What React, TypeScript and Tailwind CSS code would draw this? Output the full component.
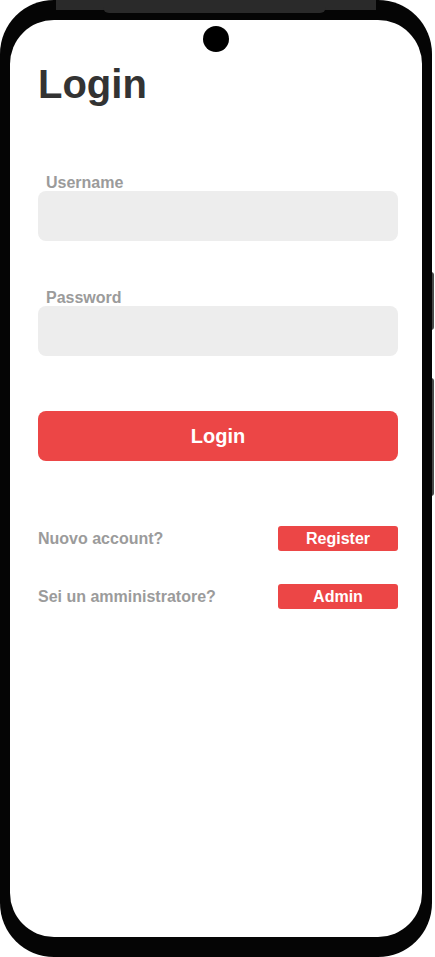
import React from "react";

const font = { fontFamily: '"Liberation Sans", Arial, sans-serif' };

function Field({ label, type }: { label: string; type: string }) {
  return (
    <label className="flex flex-col">
      <span className="pl-2 text-[16px] leading-[17px] font-bold text-[#9b9b9b]">{label}</span>
      <input type={type} className="h-[50px] w-full rounded-lg bg-[#ededed] px-3 outline-none" />
    </label>
  );
}

function LinkRow({ text, action }: { text: string; action: string }) {
  return (
    <div className="flex h-[25px] items-center justify-between">
      <span className="text-[16px] leading-[25px] font-bold text-[#9b9b9b]">{text}</span>
      <button className="h-[25px] w-[120px] rounded-[3px] bg-[#ec4646] text-[16px] leading-[25px] font-bold text-white">
        {action}
      </button>
    </div>
  );
}

export default function App() {
  return (
    <div className="relative h-[957px] w-[435px] bg-white" style={font}>
      {/* side buttons */}
      <div className="absolute left-[431px] top-[272px] h-[58px] w-[3px] rounded-r-sm bg-[#4a4a4a]" />
      <div className="absolute left-[431px] top-[378px] h-[118px] w-[3px] rounded-r-sm bg-[#4a4a4a]" />

      <div className="relative flex h-[957px] w-[432px] flex-col rounded-[54px] bg-[#050505] px-[10px] py-[20px]">
        {/* top speaker bar */}
        <div className="absolute left-[56px] top-0 h-[10px] w-[320px] bg-[#2a2a2a]" />
        <div className="absolute left-[103px] top-0 h-[13px] w-[223px] rounded-b-[6px] bg-[#2a2a2a]" />

        <div className="relative flex flex-1 flex-col rounded-[44px] bg-white pl-[28px] pr-[24px] pt-[40px]">
          {/* camera */}
          <div className="absolute left-[193px] top-[6px] h-[26px] w-[26px] rounded-full bg-black" />

          <h1 className="text-[40px] leading-[48px] font-bold text-[#333333]">Login</h1>

          <div className="mt-[66px] flex flex-col gap-[48px]">
            <Field label="Username" type="text" />
            <Field label="Password" type="password" />
          </div>

          <button className="mt-[55px] h-[50px] w-full rounded-lg bg-[#ec4646] text-[20px] font-bold text-white">
            Login
          </button>

          <div className="mt-[65px] flex flex-col gap-[33px]">
            <LinkRow text="Nuovo account?" action="Register" />
            <LinkRow text="Sei un amministratore?" action="Admin" />
          </div>
        </div>
      </div>
    </div>
  );
}
